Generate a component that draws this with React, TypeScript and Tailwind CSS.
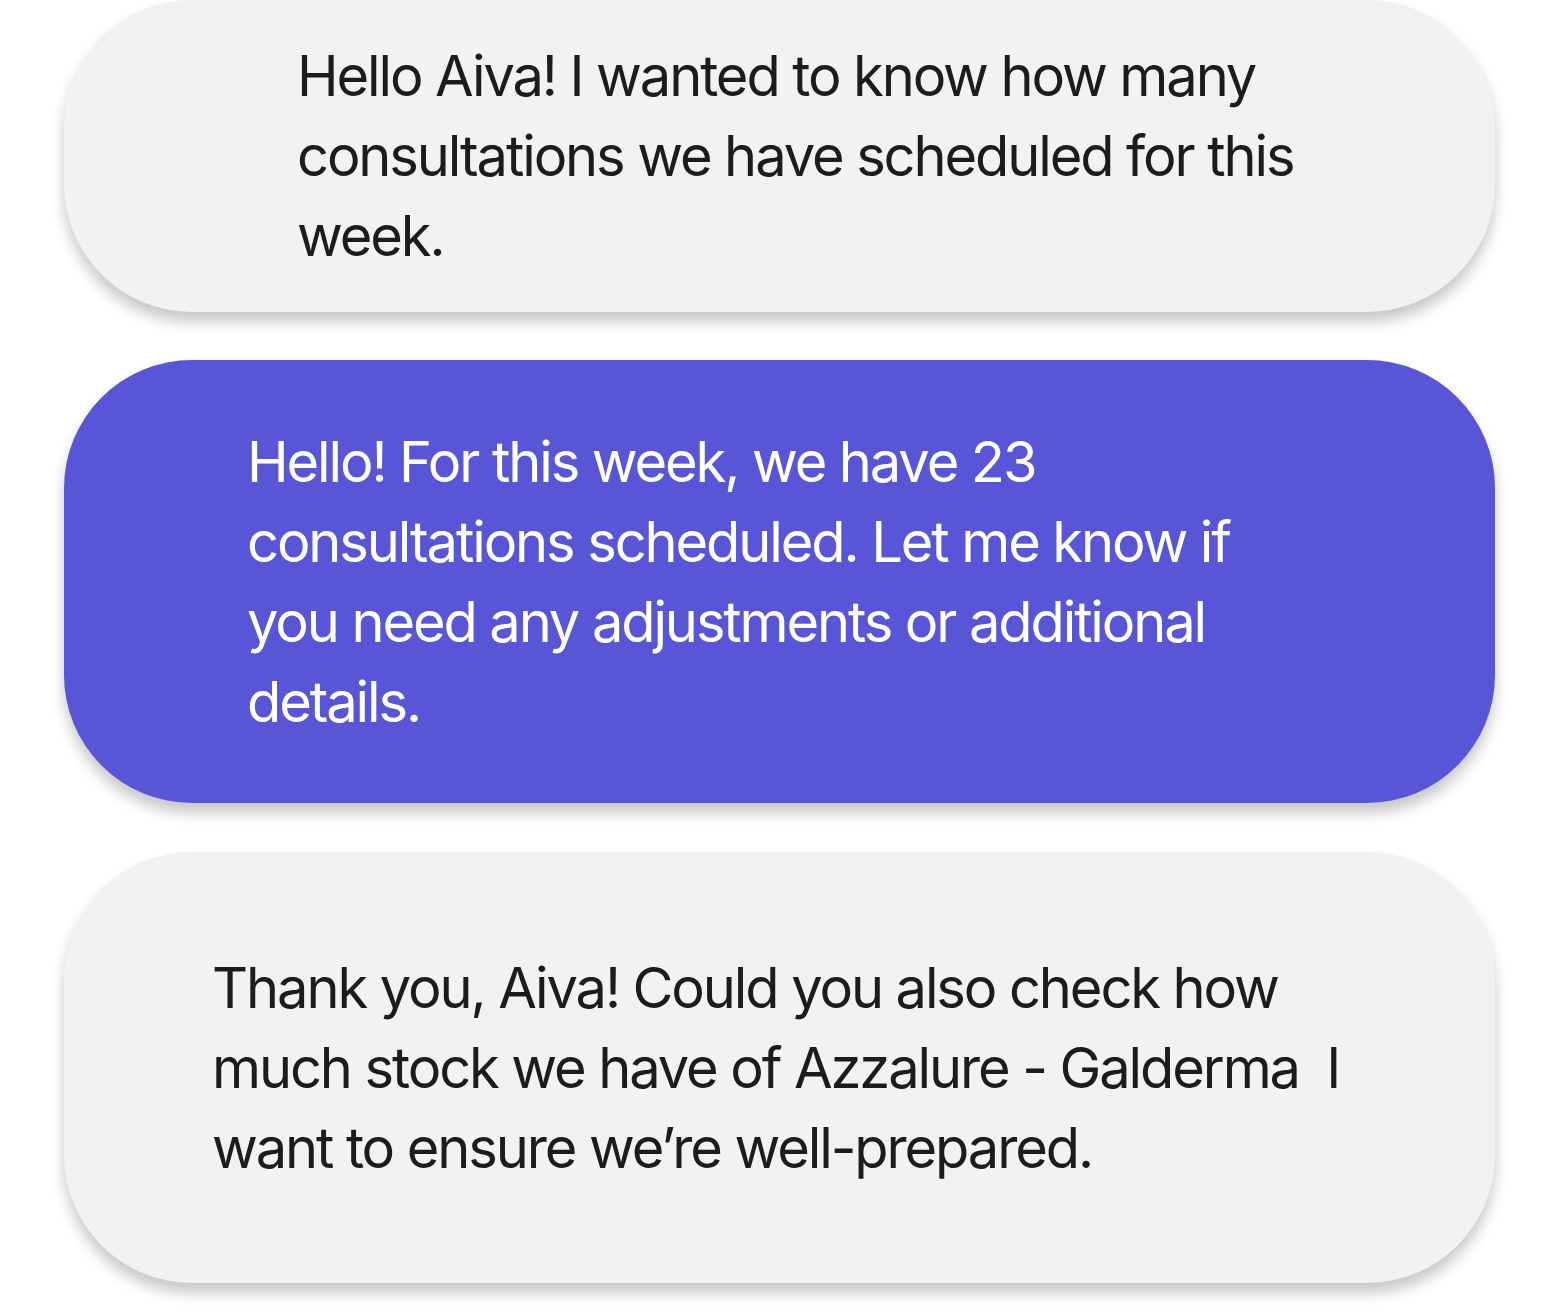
import React from "react";

const font = { fontFamily: "Inter, 'Noto Sans', sans-serif" };

export default function App() {
  return (
    <div className="w-[1560px] h-[1316px] bg-white overflow-hidden" style={font}>
      <div className="flex flex-col gap-[48px] pl-[64px] pr-[65px]">
        <div className="h-[312px] rounded-[128px] bg-[#f2f2f2] shadow-[0_10px_14px_rgba(0,0,0,0.22)] flex flex-col justify-center pl-[233px] text-[56px] leading-[80px] tracking-[-2.1px] text-[#1c1c1c]">
          <span className="whitespace-nowrap">Hello Aiva! I wanted to know how many</span>
          <span className="whitespace-nowrap">consultations we have scheduled for this</span>
          <span className="whitespace-nowrap">week.</span>
        </div>
        <div className="h-[443px] rounded-[128px] bg-[#5856d6] shadow-[0_10px_14px_rgba(0,0,0,0.22)] flex flex-col justify-center pl-[183px] text-[56px] leading-[80px] tracking-[-2.1px] text-white">
          <span className="whitespace-nowrap">Hello! For this week, we have 23</span>
          <span className="whitespace-nowrap">consultations scheduled. Let me know if</span>
          <span className="whitespace-nowrap">you need any adjustments or additional</span>
          <span className="whitespace-nowrap">details.</span>
        </div>
        <div className="h-[431px] mt-[1px] rounded-[128px] bg-[#f2f2f2] shadow-[0_10px_14px_rgba(0,0,0,0.22)] flex flex-col justify-center pl-[148px] text-[56px] leading-[80px] tracking-[-2.1px] text-[#1c1c1c]">
          <span className="whitespace-pre">Thank you, Aiva! Could you also check how</span>
          <span className="whitespace-pre">much stock we have of Azzalure - Galderma  I</span>
          <span className="whitespace-pre">want to ensure we’re well-prepared.</span>
        </div>
      </div>
    </div>
  );
}
